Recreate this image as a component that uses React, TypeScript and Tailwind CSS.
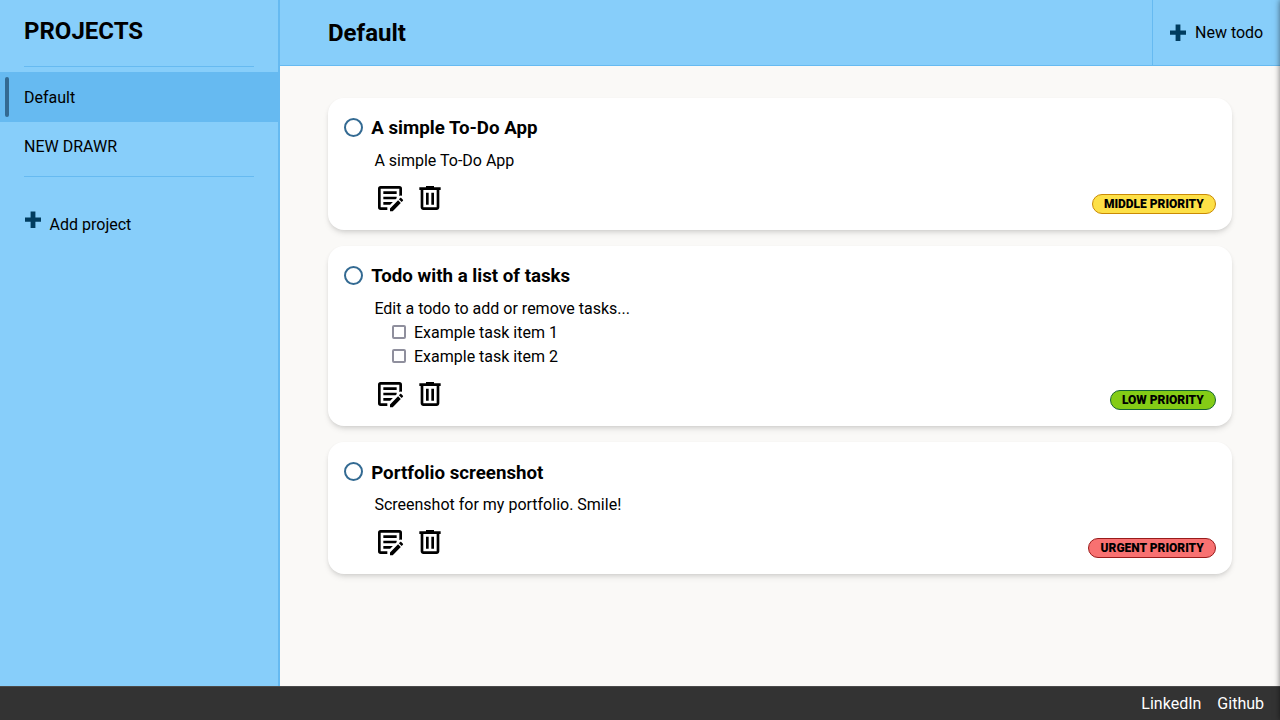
type Todo = {
  title: string;
  description: string;
  tasks: string[];
  priority: string;
  badge: string;
};

const todos: Todo[] = [
  {
    title: "A simple To-Do App",
    description: "A simple To-Do App",
    tasks: [],
    priority: "MIDDLE PRIORITY",
    badge: "border-[#ca8a04] bg-[#fde047]",
  },
  {
    title: "Todo with a list of tasks",
    description: "Edit a todo to add or remove tasks...",
    tasks: ["Example task item 1", "Example task item 2"],
    priority: "LOW PRIORITY",
    badge: "border-[#166534] bg-[#84cc16]",
  },
  {
    title: "Portfolio screenshot",
    description: "Screenshot for my portfolio. Smile!",
    tasks: [],
    priority: "URGENT PRIORITY",
    badge: "border-[#991b1b] bg-[#f87171]",
  },
];

function PlusIcon() {
  return (
    <svg className="block h-[17px] w-4 shrink-0" viewBox="0 0 16 17" fill="#003c5f">
      <path d="M5.6 .4h4.8v6.2H16v4.2h-5.6V17H5.6v-6.2H0V6.6h5.6z" />
    </svg>
  );
}

function EditIcon() {
  return (
    <svg className="size-8" viewBox="0 0 24 24">
      <path d="M10 21H5a2 2 0 0 1-2-2V5a2 2 0 0 1 2-2h14a2 2 0 0 1 2 2v5.33a2.5 2.5 0 0 0-2 .1V5H5v14h5zM7 7h10v2H7zM7 11h10v1.12l-.88.88H7zM7 15h7v.12L12.12 17H7z" />
      <path d="M21.7 14.05l-1 1-2.05-2.05 1-1c.21-.21.56-.21.77 0l1.28 1.28c.21.21.21.56 0 .77M12 19.84l6.06-6.16 2.05 2.05L14.06 21.9H12z" />
    </svg>
  );
}

function TrashIcon() {
  return (
    <svg className="size-8" viewBox="0 0 24 24">
      <path d="M7 21q-.825 0-1.412-.587T5 19V6H4V4h5V3h6v1h5v2h-1v13q0 .825-.587 1.413T17 21zM17 6H7v13h10zM9 17h2V8H9zm4 0h2V8h-2z" />
    </svg>
  );
}

function TodoCard({ todo }: { todo: Todo }) {
  return (
    <article className="flex flex-col rounded-2xl bg-white p-4 shadow-[0_4px_6px_-1px_rgba(0,0,0,0.1),0_2px_4px_-1px_rgba(0,0,0,0.1)]">
      <div className="flex h-[28.08px] gap-2">
        <button className="mt-[3.9px] size-[19.2px] shrink-0 rounded-full border-2 border-[#336a92]" aria-label="Complete" />
        <h3 className="pt-[0.35px] text-[18.72px] leading-[28.08px] font-bold">{todo.title}</h3>
      </div>
      <p className="mt-[6.5px] pl-[30.4px]">{todo.description}</p>
      {todo.tasks.map((task) => (
        <div key={task} className="flex h-6 items-center gap-2 pl-12">
          <span className="mb-px size-[14px] rounded-[2px] border-2 border-[#8f8f9d]" />
          <span>{task}</span>
        </div>
      ))}
      <div className="mt-[9.5px] flex h-8 items-end justify-between pl-[30px]">
        <div className="flex gap-2">
          <EditIcon />
          <TrashIcon />
        </div>
        <span className={`flex h-5 items-center rounded-full border px-[11.2px] text-xs font-black ${todo.badge}`}>
          {todo.priority}
        </span>
      </div>
    </article>
  );
}

export default function App() {
  return (
    <div className="relative flex h-screen w-screen flex-col overflow-hidden bg-[#faf9f7] font-['Roboto',sans-serif] text-base leading-6 text-black">
      <div className="flex min-h-0 flex-1">
        <aside className="flex w-[280px] shrink-0 flex-col border-r-2 border-[#66baf1] bg-[#87cefa]">
          <h2 className="mt-[13px] h-9 pl-6 text-2xl leading-9 font-bold">PROJECTS</h2>
          <div className="mt-[17px] mr-6 ml-6 h-px bg-[#66baf1]" />
          <nav className="mt-[5px] flex flex-col">
            <a className="flex h-[50px] items-center bg-[#66baf1] pl-[5px]">
              <span className="mr-[15px] h-10 w-1 rounded-sm bg-[#336a92]" />
              <span className="pt-[2px]">Default</span>
            </a>
            <a className="flex h-12 items-center pt-[2px] pl-6">NEW DRAWR</a>
          </nav>
          <div className="mt-[6px] mr-6 ml-6 h-px bg-[#66baf1]" />
          <button className="mt-[34px] flex items-start gap-[8.6px] pl-[25px]">
            <PlusIcon />
            <span className="mt-[2px]">Add project</span>
          </button>
        </aside>
        <div className="flex flex-1 flex-col">
          <header className="flex h-[66px] items-stretch justify-between border-b border-[#66baf1] bg-[#87cefa] pl-12">
            <h1 className="flex items-center text-2xl font-bold">Default</h1>
            <button className="flex w-32 items-center gap-[9px] border-l border-[#66baf1] pl-[17px]">
              <PlusIcon />
              New todo
            </button>
          </header>
          <main className="flex flex-col gap-4 px-12 pt-8">
            {todos.map((todo) => (
              <TodoCard key={todo.title} todo={todo} />
            ))}
          </main>
        </div>
      </div>
      <footer className="flex h-[34px] shrink-0 items-center justify-end gap-4 border-t border-[#4a4a4a] bg-[#333333] pr-4 text-white">
        <a>LinkedIn</a>
        <a>Github</a>
      </footer>
      <div className="absolute top-0 left-full h-full w-10 shadow-[0_0_6px_rgba(0,0,0,0.55)]" />
    </div>
  );
}
